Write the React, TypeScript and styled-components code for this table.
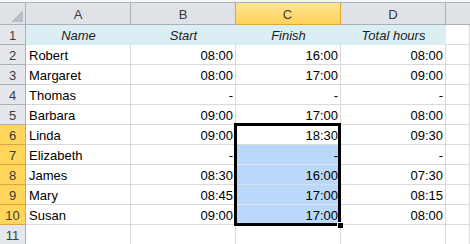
import styled, { createGlobalStyle, css } from "styled-components";

const GlobalStyle = createGlobalStyle`
  html, body {
    margin: 0;
    padding: 0;
    background: #ffffff;
    overflow: hidden;
  }
  body {
    font-family: "Liberation Sans", Arial, sans-serif;
    font-size: 13px;
    color: #000000;
  }
`;

type Align = "left" | "right" | "center";

const rows: [string, string, string, string][] = [
  ["Robert", "08:00", "16:00", "08:00"],
  ["Margaret", "08:00", "17:00", "09:00"],
  ["Thomas", "-", "-", "-"],
  ["Barbara", "09:00", "17:00", "08:00"],
  ["Linda", "09:00", "18:30", "09:30"],
  ["Elizabeth", "-", "-", "-"],
  ["James", "08:30", "16:00", "07:30"],
  ["Mary", "08:45", "17:00", "08:15"],
  ["Susan", "09:00", "17:00", "08:00"],
];

const columns = ["A", "B", "C", "D", ""];
const selectedColumn = "C";
const selectedRows = [6, 7, 8, 9, 10];

const App = () => {
  return (
    <>
      <GlobalStyle />
      <Wrapper>
        <Sheet>
          <Corner>
            <svg width="12" height="12" viewBox="0 0 12 12">
              <polygon points="12,0 12,12 0,12" fill="#b9bfc7" />
            </svg>
          </Corner>
          {columns.map((c, i) => (
            <ColHeader key={i} $active={c === selectedColumn} $last={i === columns.length - 1}>
              {c}
            </ColHeader>
          ))}

          <RowHeader $active={false}>1</RowHeader>
          <Cell $align="center" $fill="#daeef3" $italic>Name</Cell>
          <Cell $align="center" $fill="#daeef3" $italic>Start</Cell>
          <Cell $align="center" $fill="#daeef3" $italic>Finish</Cell>
          <Cell $align="center" $fill="#daeef3" $italic>Total hours</Cell>
          <Cell />

          {rows.map((r, i) => {
            const n = i + 2;
            const inRange = selectedRows.includes(n);
            return [
              <RowHeader key={`h${n}`} $active={inRange}>{n}</RowHeader>,
              <Cell key={`a${n}`} $align="left">{r[0]}</Cell>,
              <Cell key={`b${n}`} $align="right">{r[1]}</Cell>,
              <Cell key={`c${n}`} $align="right" $selected={inRange && n !== 6}>{r[2]}</Cell>,
              <Cell key={`d${n}`} $align="right">{r[3]}</Cell>,
              <Cell key={`e${n}`} />,
            ];
          })}

          <RowHeader $active={false}>11</RowHeader>
          {columns.map((_, i) => (
            <Cell key={`r11${i}`} />
          ))}
        </Sheet>
        <Selection>
          <FillHandle />
        </Selection>
      </Wrapper>
    </>
  );
};

export default App;

const Wrapper = styled.div`
  position: relative;
  width: 470px;
  height: 244px;
  padding-top: 2px;
  box-sizing: border-box;
  background: #f4f5f7;
`;

const Sheet = styled.div`
  display: grid;
  grid-template-columns: 26px 105px 105px 105px 105px 1fr;
  grid-template-rows: 22px repeat(11, 20px);
  border-top: 1px solid #a9b4c0;
  background: #ffffff;
`;

const headerBase = css`
  box-sizing: border-box;
  display: flex;
  align-items: center;
  justify-content: center;
  color: #3b3b3b;
  border-right: 1px solid #abb0b6;
  border-bottom: 1px solid #abb0b6;
`;

const Corner = styled.div`
  ${headerBase};
  background: #dfe3e8;
  align-items: flex-end;
  justify-content: flex-end;
  padding: 0 2px 2px 0;
`;

const ColHeader = styled.div<{ $active: boolean; $last: boolean }>`
  ${headerBase};
  background: #dfe3e8;
  padding-top: 1px;
  ${({ $last }) => $last && "border-right: none;"}
  ${({ $active }) =>
    $active &&
    css`
      background: linear-gradient(#ffe592, #ffd35c);
      border-right-color: #e2a33d;
      border-bottom-color: #e2a33d;
      box-shadow: inset 1px 0 0 #e2a33d;
      margin-left: -1px;
    `}
`;

const RowHeader = styled.div<{ $active: boolean }>`
  ${headerBase};
  background: #e4e7eb;
  padding-top: 1px;
  ${({ $active }) =>
    $active &&
    css`
      background: #ffd55c;
      border-right-color: #e2a33d;
      border-bottom-color: #e2a33d;
    `}
`;

const Cell = styled.div<{
  $align?: Align;
  $fill?: string;
  $italic?: boolean;
  $selected?: boolean;
}>`
  box-sizing: border-box;
  display: flex;
  align-items: center;
  padding: 2px 2px 0 3px;
  white-space: nowrap;
  overflow: hidden;
  border-right: 1px solid #d9dadb;
  border-bottom: 1px solid #d9dadb;
  justify-content: ${({ $align }) =>
    $align === "right" ? "flex-end" : $align === "center" ? "center" : "flex-start"};
  ${({ $italic }) => $italic && "font-style: italic; color: #1c1c1c;"}
  ${({ $fill }) =>
    $fill &&
    css`
      background: ${$fill};
      border-color: ${$fill};
    `}
  ${({ $selected }) =>
    $selected &&
    css`
      background: #bad8fa;
      border-bottom-color: #d3e1ef;
    `}
`;

const Selection = styled.div`
  position: absolute;
  left: 234px;
  top: 123px;
  width: 107px;
  height: 103px;
  box-sizing: border-box;
  border: 3px solid #000000;
  pointer-events: none;
`;

const FillHandle = styled.div`
  position: absolute;
  right: -5px;
  bottom: -5px;
  width: 5px;
  height: 5px;
  background: #000000;
  border-left: 1px solid #ffffff;
  border-top: 1px solid #ffffff;
`;
